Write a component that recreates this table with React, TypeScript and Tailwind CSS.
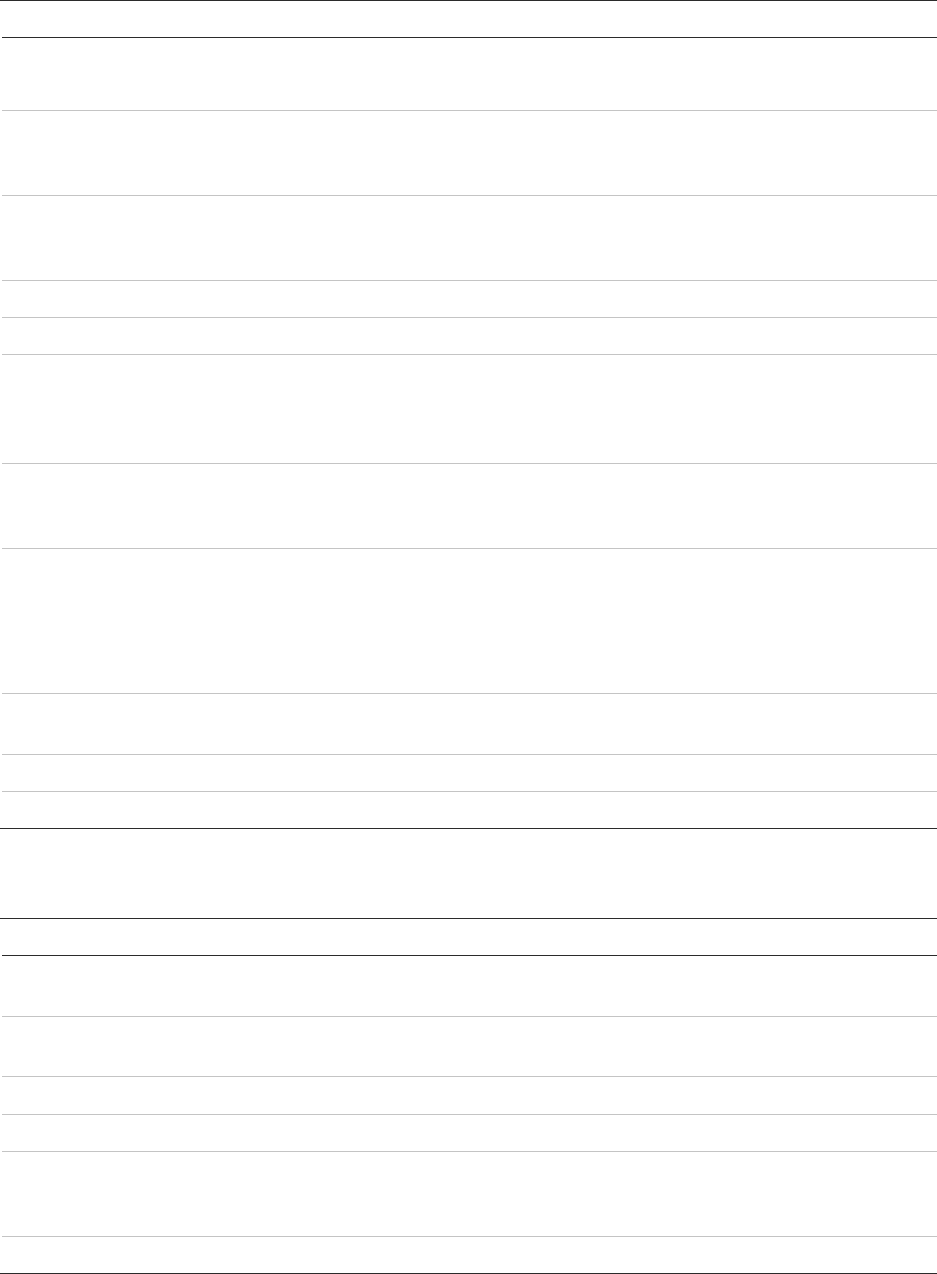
import React from "react";

interface TableBlockProps {
  rows: string[];
  className?: string;
}

// Borders-only table: the cell text in this view renders blank
const TableBlock: React.FC<TableBlockProps> = ({ rows, className }) => {
  return (
    <div className={`border-y border-[#2b2b2b] ${className ?? ""}`}>
      {/* Header */}
      <div className="ml-[2px] h-[37px] border-b border-[#2b2b2b]" />

      {/* Body */}
      {rows.map((h, i) => (
        <div
          key={i}
          className={`ml-[2px] ${h} ${
            i < rows.length - 1 ? "border-b border-[#c4c4c4]" : ""
          }`}
        />
      ))}
    </div>
  );
};

const firstRows = [
  "h-[73px]",
  "h-[85px]",
  "h-[85px]",
  "h-[37px]",
  "h-[37px]",
  "h-[109px]",
  "h-[85px]",
  "h-[145px]",
  "h-[61px]",
  "h-[37px]",
  "h-[36px]",
];

const secondRows = [
  "h-[61px]",
  "h-[60px]",
  "h-[38px]",
  "h-[37px]",
  "h-[85px]",
  "h-[36px]",
];

export default function App() {
  return (
    <div className="min-h-[1274px] w-full bg-white font-['Liberation_Sans',sans-serif] text-white">
      <TableBlock rows={firstRows} />
      <TableBlock rows={secondRows} className="mt-[89px]" />
    </div>
  );
}
